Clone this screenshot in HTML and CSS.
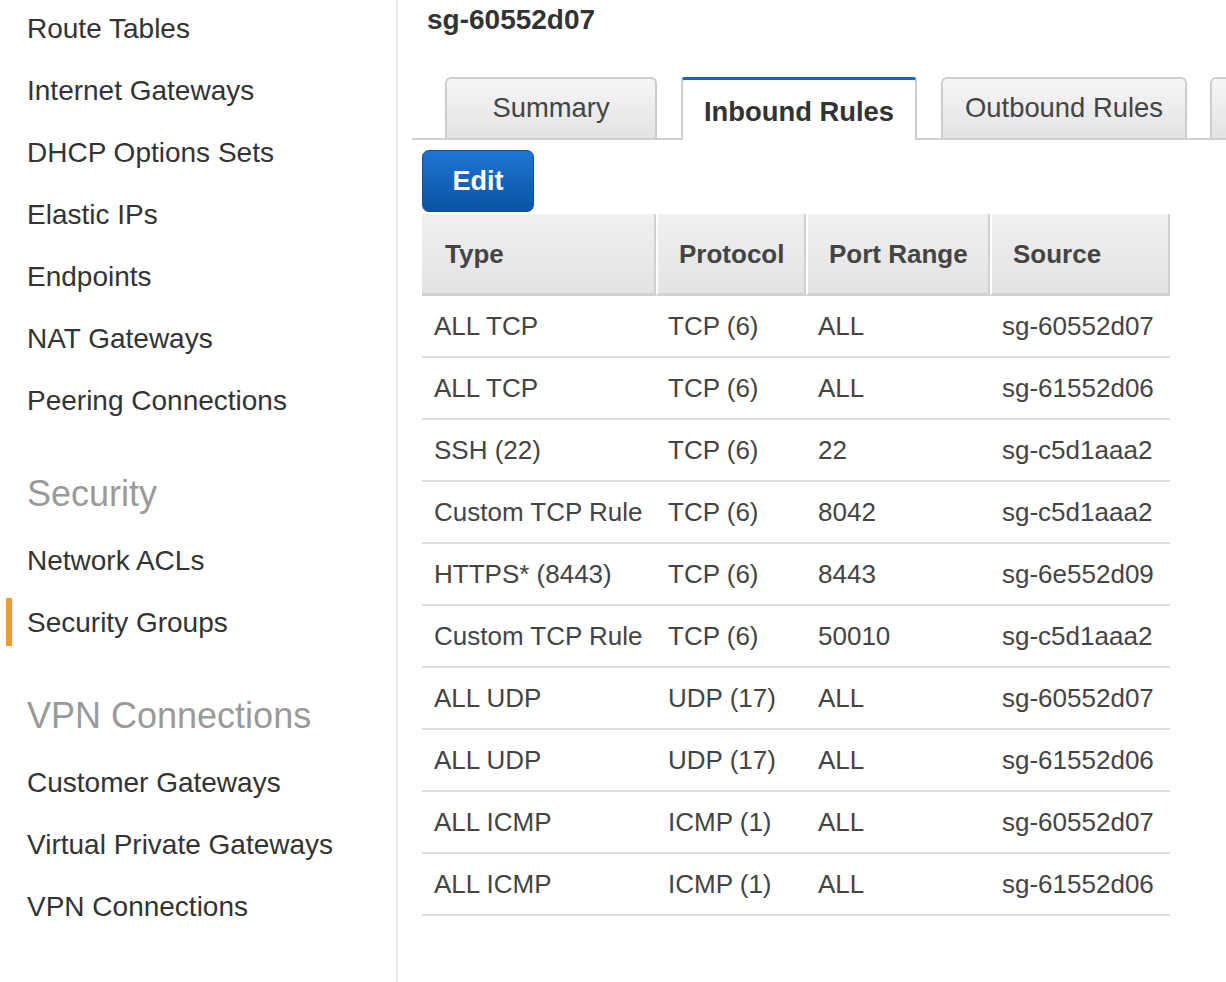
FILE: index.html
```html
<!DOCTYPE html>
<html lang="en">
<head>
<meta charset="utf-8">
<title>Security Groups</title>
<link rel="stylesheet" href="styles.css">
</head>
<body>
<div class="layout">
  <aside class="sidebar">
    <ul class="nav">
      <li class="nav-item">Route Tables</li>
      <li class="nav-item">Internet Gateways</li>
      <li class="nav-item">DHCP Options Sets</li>
      <li class="nav-item">Elastic IPs</li>
      <li class="nav-item">Endpoints</li>
      <li class="nav-item">NAT Gateways</li>
      <li class="nav-item">Peering Connections</li>
      <li class="nav-heading">Security</li>
      <li class="nav-item">Network ACLs</li>
      <li class="nav-item selected">Security Groups</li>
      <li class="nav-heading">VPN Connections</li>
      <li class="nav-item">Customer Gateways</li>
      <li class="nav-item">Virtual Private Gateways</li>
      <li class="nav-item">VPN Connections</li>
    </ul>
  </aside>
  <main class="main">
    <h1 class="title">sg-60552d07</h1>
    <div class="tabs">
      <div class="tab tab-summary">Summary</div>
      <div class="tab active">Inbound Rules</div>
      <div class="tab">Outbound Rules</div>
      <div class="tab tab-more"></div>
    </div>
    <div class="panel">
      <button class="btn-edit">Edit</button>
      <table class="rules">
        <colgroup>
          <col class="c-type">
          <col class="c-proto">
          <col class="c-port">
          <col class="c-src">
        </colgroup>
        <thead>
          <tr><th>Type</th><th>Protocol</th><th>Port Range</th><th>Source</th></tr>
        </thead>
        <tbody>
          <tr><td>ALL TCP</td><td>TCP (6)</td><td>ALL</td><td>sg-60552d07</td></tr>
          <tr><td>ALL TCP</td><td>TCP (6)</td><td>ALL</td><td>sg-61552d06</td></tr>
          <tr><td>SSH (22)</td><td>TCP (6)</td><td>22</td><td>sg-c5d1aaa2</td></tr>
          <tr><td>Custom TCP Rule</td><td>TCP (6)</td><td>8042</td><td>sg-c5d1aaa2</td></tr>
          <tr><td>HTTPS* (8443)</td><td>TCP (6)</td><td>8443</td><td>sg-6e552d09</td></tr>
          <tr><td>Custom TCP Rule</td><td>TCP (6)</td><td>50010</td><td>sg-c5d1aaa2</td></tr>
          <tr><td>ALL UDP</td><td>UDP (17)</td><td>ALL</td><td>sg-60552d07</td></tr>
          <tr><td>ALL UDP</td><td>UDP (17)</td><td>ALL</td><td>sg-61552d06</td></tr>
          <tr><td>ALL ICMP</td><td>ICMP (1)</td><td>ALL</td><td>sg-60552d07</td></tr>
          <tr><td>ALL ICMP</td><td>ICMP (1)</td><td>ALL</td><td>sg-61552d06</td></tr>
        </tbody>
      </table>
    </div>
  </main>
</div>
</body>
</html>
```

FILE: styles.css
```css
* { box-sizing: border-box; }

html, body {
  margin: 0;
  padding: 0;
  background: #fff;
  overflow: hidden;
}

body {
  font-family: "Liberation Sans", Arial, Helvetica, sans-serif;
  color: #333;
}

.layout {
  display: flex;
  min-height: 100vh;
}

.sidebar {
  width: 398px;
  flex-shrink: 0;
  border-right: 2px solid #ececec;
}

.nav {
  list-style: none;
  margin: -3px 0 0;
  padding: 0;
}

.nav-item {
  position: relative;
  height: 62px;
  line-height: 63px;
  padding-left: 27px;
  font-size: 28px;
  color: #333;
  white-space: nowrap;
}

.nav-item.selected::before {
  content: "";
  position: absolute;
  left: 6px;
  top: 7px;
  bottom: 7px;
  width: 6px;
  background: #f7972b;
}

.nav-heading {
  margin: 40px 0 14px;
  padding-left: 27px;
  height: 44px;
  line-height: 45px;
  font-size: 36px;
  color: #9a9a9a;
  white-space: nowrap;
}

.main {
  flex: 1;
  min-width: 0;
  padding-left: 14px;
}

.title {
  margin: 0;
  padding: 4px 0 0 15px;
  font-size: 28px;
  line-height: 32px;
  font-weight: bold;
  color: #333;
}

.tabs {
  display: flex;
  align-items: flex-end;
  gap: 24px;
  margin-top: 41px;
  padding-left: 33px;
  height: 63px;
  border-bottom: 2px solid #cfcfcf;
}

.tab {
  flex-shrink: 0;
  height: 61px;
  padding: 13px 22px 0;
  border: 2px solid #cdcdcd;
  border-bottom: 0;
  border-radius: 6px 6px 0 0;
  background: linear-gradient(#f6f6f6, #e3e3e3);
  font-size: 27.4px;
  line-height: 32px;
  color: #444;
  text-align: center;
  white-space: nowrap;
}

.tab-summary {
  width: 212px;
}

.tab-more {
  width: 120px;
  margin-left: -1px;
}

.tab.active {
  width: 236px;
  height: 63px;
  margin-bottom: -2px;
  padding: 16px 0 0;
  border-top: 3px solid #1467bd;
  border-radius: 4px 4px 0 0;
  background: #fff;
  font-weight: bold;
  color: #333;
}

.panel {
  padding: 10px 0 0 10px;
}

.btn-edit {
  display: block;
  width: 112px;
  height: 62px;
  margin: 0 0 2px;
  padding: 0;
  border: 1px solid #0c4f9a;
  border-radius: 7px;
  background: linear-gradient(#1f75d3, #0a54a5);
  color: #fff;
  font-family: "Liberation Sans", Arial, Helvetica, sans-serif;
  font-size: 27px;
  font-weight: bold;
  line-height: 60px;
}

.rules {
  width: 748px;
  table-layout: fixed;
  border-collapse: separate;
  border-spacing: 0;
}

.c-type { width: 234px; }
.c-proto { width: 150px; }
.c-port { width: 184px; }
.c-src { width: 180px; }

.rules th {
  padding: 2px 0 0 21px;
  line-height: 77px;
  text-align: left;
  font-size: 26px;
  font-weight: bold;
  color: #444;
  white-space: nowrap;
  background: linear-gradient(#f0f0f0, #e3e3e3);
  border-bottom: 3px solid #d2d2d2;
  border-right: 2px solid #d0d0d0;
}

.rules th + th {
  border-left: 2px solid #fff;
}

.rules th:first-child {
  padding-left: 23px;
}

.rules td {
  padding: 0 0 0 12px;
  line-height: 60px;
  font-size: 26px;
  color: #444;
  white-space: nowrap;
  border-bottom: 2px solid #dddddd;
}
```
